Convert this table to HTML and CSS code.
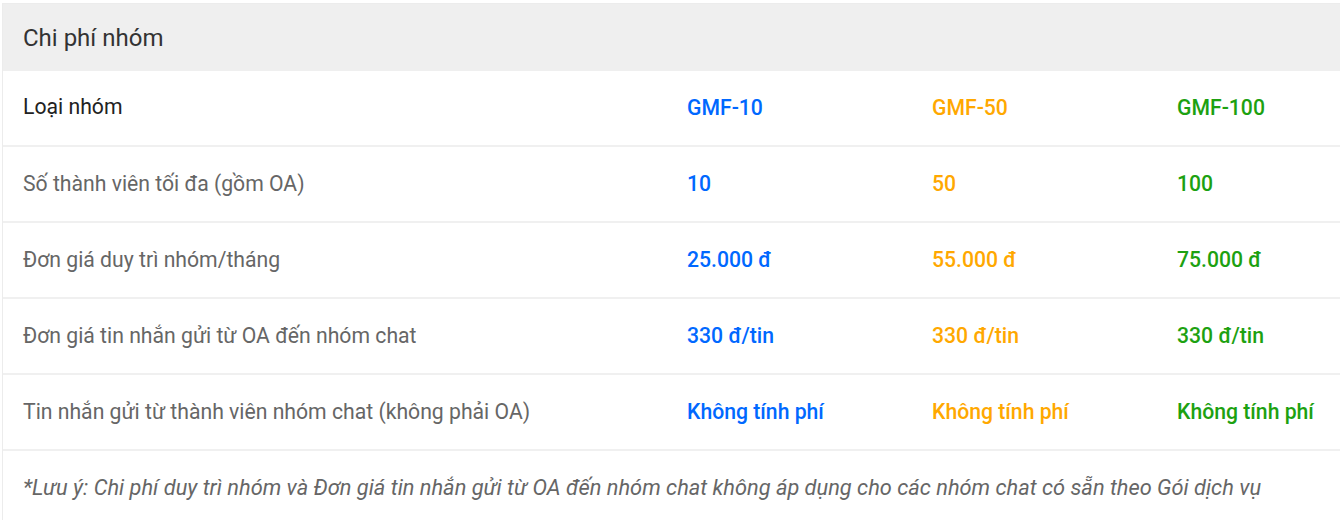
FILE: index.html
```html
<!DOCTYPE html>
<html lang="vi">
<head>
<meta charset="utf-8">
<link rel="stylesheet" href="styles.css">
</head>
<body>
<div class="card">
  <div class="card-head">Chi phí nhóm</div>
  <div class="row row-head">
    <div class="label">Loại nhóm</div>
    <div class="val blue">GMF-10</div>
    <div class="val orange">GMF-50</div>
    <div class="val green">GMF-100</div>
  </div>
  <div class="row">
    <div class="label">Số thành viên tối đa (gồm OA)</div>
    <div class="val blue">10</div>
    <div class="val orange">50</div>
    <div class="val green">100</div>
  </div>
  <div class="row">
    <div class="label">Đơn giá duy trì nhóm/tháng</div>
    <div class="val blue">25.000 đ</div>
    <div class="val orange">55.000 đ</div>
    <div class="val green">75.000 đ</div>
  </div>
  <div class="row">
    <div class="label">Đơn giá tin nhắn gửi từ OA đến nhóm chat</div>
    <div class="val blue">330 đ/tin</div>
    <div class="val orange">330 đ/tin</div>
    <div class="val green">330 đ/tin</div>
  </div>
  <div class="row">
    <div class="label">Tin nhắn gửi từ thành viên nhóm chat (không phải OA)</div>
    <div class="val blue">Không tính phí</div>
    <div class="val orange">Không tính phí</div>
    <div class="val green">Không tính phí</div>
  </div>
  <div class="note">*Lưu ý: Chi phí duy trì nhóm và Đơn giá tin nhắn gửi từ OA đến nhóm chat không áp dụng cho các nhóm chat có sẵn theo Gói dịch vụ</div>
</div>
</body>
</html>
```
FILE: styles.css
```css
html, body {
  margin: 0;
  padding: 0;
  background: #ffffff;
  overflow: hidden;
}
body {
  padding: 3px 0 0 2px;
  font-family: Roboto, "Noto Sans", sans-serif;
}
.card {
  width: calc(100vw - 3px);
  border: 1px solid #ececec;
  border-right: none;
  background: #ffffff;
}
.card-head {
  background: #efefef;
  height: 67px;
  display: flex;
  align-items: center;
  padding: 1px 20px 0;
  box-sizing: border-box;
  font-size: 24px;
  color: #333333;
}
.row {
  display: grid;
  grid-template-columns: 684px 245px 245px 1fr;
  height: 74px;
  align-items: center;
  border-bottom: 2px solid #f0f0f0;
  font-size: 21.2px;
}
.label {
  padding: 0 0 2px 20px;
  color: #666666;
}
.row-head .label {
  color: #222222;
  padding-bottom: 3px;
}
.val {
  font-weight: 500;
  padding-bottom: 2px;
  white-space: nowrap;
}
.blue { color: #0068ff; }
.orange { color: #ffa800; }
.green { color: #1da111; }
.note {
  padding: 24px 20px 40px;
  font-size: 21.8px;
  font-style: italic;
  color: #666666;
  white-space: nowrap;
}
```
